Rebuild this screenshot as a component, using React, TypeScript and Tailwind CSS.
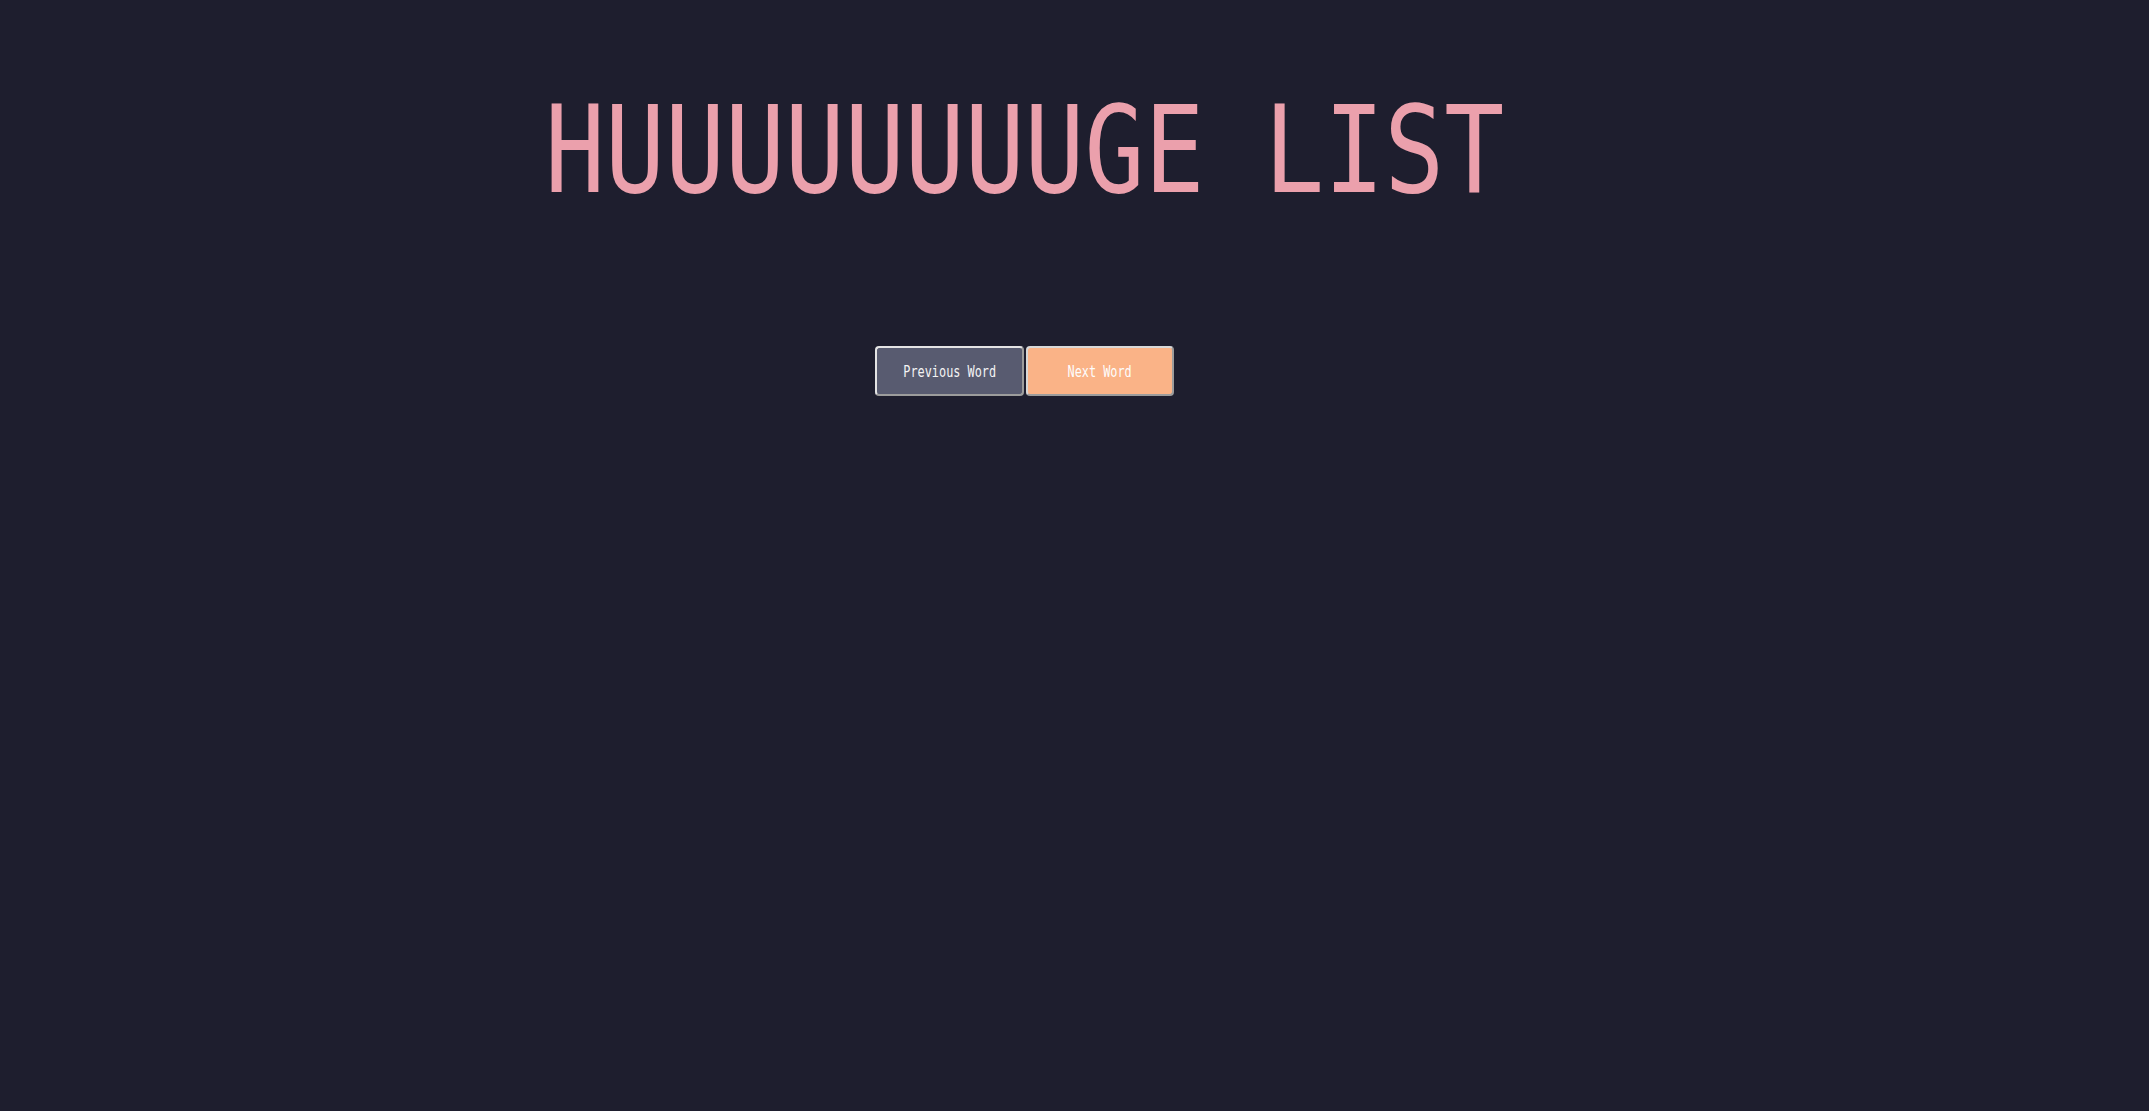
import React from 'react'

const words = ['HUUUUUUUUGE LIST']

const App = () => {
  const [index, setIndex] = React.useState(0)

  const prev = () => setIndex((i) => (i - 1 + words.length) % words.length)
  const next = () => setIndex((i) => (i + 1) % words.length)

  return (
    <div className="min-h-screen w-full bg-[#1e1e2e] font-['DejaVu_Sans_Mono',monospace]">
      <div className="flex flex-col items-center pr-[100px]">
        <h1 className="mt-[89px] whitespace-pre text-[122px] leading-none font-normal text-[#eba0ac] scale-x-[0.816]">
          {words[index]}
        </h1>

        <div className="mt-[135px] flex gap-[2px]">
          <button
            onClick={prev}
            className="flex h-[50px] w-[149px] items-center justify-center rounded-[4px] border-2 border-t-[#e4e4e4] border-l-[#e4e4e4] border-r-[#9c9c9c] border-b-[#9c9c9c] bg-[#585b70] pt-[2px] text-[15px] text-[#f4f4f4]"
          >
            <span className="scale-x-[0.79] whitespace-pre">Previous Word</span>
          </button>
          <button
            onClick={next}
            className="flex h-[50px] w-[148px] items-center justify-center rounded-[4px] border-2 border-t-[#d8d8d8] border-l-[#d8d8d8] border-r-[#9c9c9c] border-b-[#9c9c9c] bg-[#fab387] pt-[2px] text-[15px] text-[#fdfdfd]"
          >
            <span className="scale-x-[0.79] whitespace-pre">Next Word</span>
          </button>
        </div>
      </div>
    </div>
  )
}

export default App
